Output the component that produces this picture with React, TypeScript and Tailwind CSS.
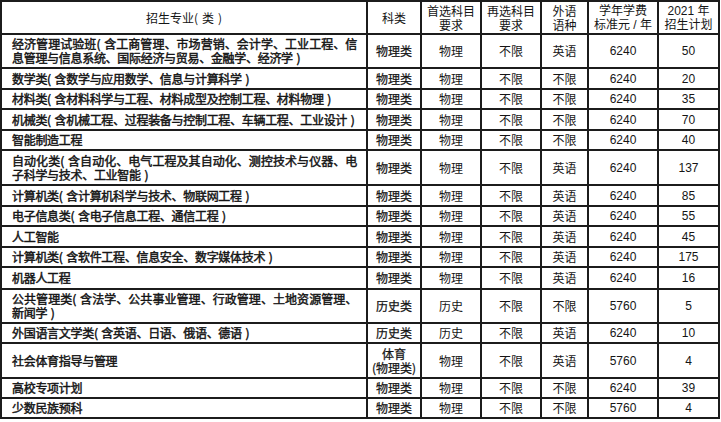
const rows = [
  {
    name: ["经济管理试验班（含工商管理、市场营销、会计学、工业工程、信", "息管理与信息系统、国际经济与贸易、金融学、经济学）"],
    cat: ["物理类"], first: "物理", second: "不限", lang: "英语", fee: "6240", plan: "50", h: "h-[34px]",
  },
  { name: ["数学类（含数学与应用数学、信息与计算科学）"], cat: ["物理类"], first: "物理", second: "不限", lang: "不限", fee: "6240", plan: "20", h: "h-[21px]" },
  { name: ["材料类（含材料科学与工程、材料成型及控制工程、材料物理）"], cat: ["物理类"], first: "物理", second: "不限", lang: "不限", fee: "6240", plan: "35", h: "h-[20px]" },
  { name: ["机械类（含机械工程、过程装备与控制工程、车辆工程、工业设计）"], cat: ["物理类"], first: "物理", second: "不限", lang: "不限", fee: "6240", plan: "70", h: "h-[21px]" },
  { name: ["智能制造工程"], cat: ["物理类"], first: "物理", second: "不限", lang: "不限", fee: "6240", plan: "40", h: "h-[20px]" },
  {
    name: ["自动化类（含自动化、电气工程及其自动化、测控技术与仪器、电", "子科学与技术、工业智能）"],
    cat: ["物理类"], first: "物理", second: "不限", lang: "英语", fee: "6240", plan: "137", h: "h-[35px]",
  },
  { name: ["计算机类（含计算机科学与技术、物联网工程）"], cat: ["物理类"], first: "物理", second: "不限", lang: "英语", fee: "6240", plan: "85", h: "h-[21px]" },
  { name: ["电子信息类（含电子信息工程、通信工程）"], cat: ["物理类"], first: "物理", second: "不限", lang: "英语", fee: "6240", plan: "55", h: "h-[20px]" },
  { name: ["人工智能"], cat: ["物理类"], first: "物理", second: "不限", lang: "英语", fee: "6240", plan: "45", h: "h-[21px]" },
  { name: ["计算机类（含软件工程、信息安全、数字媒体技术）"], cat: ["物理类"], first: "物理", second: "不限", lang: "英语", fee: "6240", plan: "175", h: "h-[20px]" },
  { name: ["机器人工程"], cat: ["物理类"], first: "物理", second: "不限", lang: "英语", fee: "6240", plan: "16", h: "h-[22px]" },
  {
    name: ["公共管理类（含法学、公共事业管理、行政管理、土地资源管理、", "新闻学）"],
    cat: ["历史类"], first: "历史", second: "不限", lang: "不限", fee: "5760", plan: "5", h: "h-[34px]",
  },
  { name: ["外国语言文学类（含英语、日语、俄语、德语）"], cat: ["历史类"], first: "历史", second: "不限", lang: "英语", fee: "6240", plan: "10", h: "h-[20px]" },
  { name: ["社会体育指导与管理"], cat: ["体育", "(物理类)"], first: "物理", second: "不限", lang: "英语", fee: "5760", plan: "4", h: "h-[35px]" },
  { name: ["高校专项计划"], cat: ["物理类"], first: "物理", second: "不限", lang: "不限", fee: "6240", plan: "39", h: "h-[20px]" },
  { name: ["少数民族预科"], cat: ["物理类"], first: "物理", second: "不限", lang: "不限", fee: "5760", plan: "4", h: "h-[20px]" },
];

const grid = "grid grid-cols-[366px_54px_60px_60px_47px_70px_61px]";
const cell = "border-r-2 border-b-2 border-[#1c1c1c] flex flex-col items-center justify-center text-center leading-[14px]";
const cjk = "font-['Noto_Sans_CJK_SC',sans-serif]";

// the print sets half-width parens with a little room on the inner side
const fix = (s: string) => s.replace(/（/g, "(\u2004").replace(/）/g, "\u2004)");

const App = () => {
  return (
    <div className="w-[721px] h-[422px] bg-white text-[#151515] font-['Liberation_Sans','Noto_Sans_CJK_SC',sans-serif] text-[12px]">
      <div className="w-[720px] border-l-2 border-t-2 border-[#1c1c1c]">
        <div className={`${grid} h-[33px]`}>
          <div className={`${cell} ${cjk}`}>{fix("招生专业（类）")}</div>
          <div className={`${cell} ${cjk}`}>科类</div>
          <div className={`${cell} ${cjk}`}>
            <span>首选科目</span>
            <span>要求</span>
          </div>
          <div className={`${cell} ${cjk}`}>
            <span>再选科目</span>
            <span>要求</span>
          </div>
          <div className={`${cell} ${cjk}`}>
            <span>外语</span>
            <span>语种</span>
          </div>
          <div className={cell}>
            <span>学年学费</span>
            <span>标准元 / 年</span>
          </div>
          <div className={cell}>
            <span>2021 年</span>
            <span>招生计划</span>
          </div>
        </div>
        {rows.map((r, i) => (
          <div key={i} className={`${grid} ${r.h}`}>
            <div className={`${cell} ${cjk} !items-start !text-left pl-[10px] pr-[9px] tracking-[-0.3px] whitespace-pre [-webkit-text-stroke:0.45px_#151515]`}>
              {r.name.map((l, j) => (
                <span
                  key={j}
                  className={j === 0 && r.name.length > 1 ? "block w-full text-justify [text-align-last:justify]" : "block"}
                >
                  {fix(l)}
                </span>
              ))}
            </div>
            <div className={`${cell} ${cjk} [-webkit-text-stroke:0.25px_#151515]`}>
              {r.cat.map((l, j) => (
                <span key={j}>{l}</span>
              ))}
            </div>
            <div className={`${cell} ${cjk}`}>{r.first}</div>
            <div className={`${cell} ${cjk}`}>{r.second}</div>
            <div className={`${cell} ${cjk}`}>{r.lang}</div>
            <div className={cell}>{r.fee}</div>
            <div className={cell}>{r.plan}</div>
          </div>
        ))}
      </div>
    </div>
  );
};

export default App;
